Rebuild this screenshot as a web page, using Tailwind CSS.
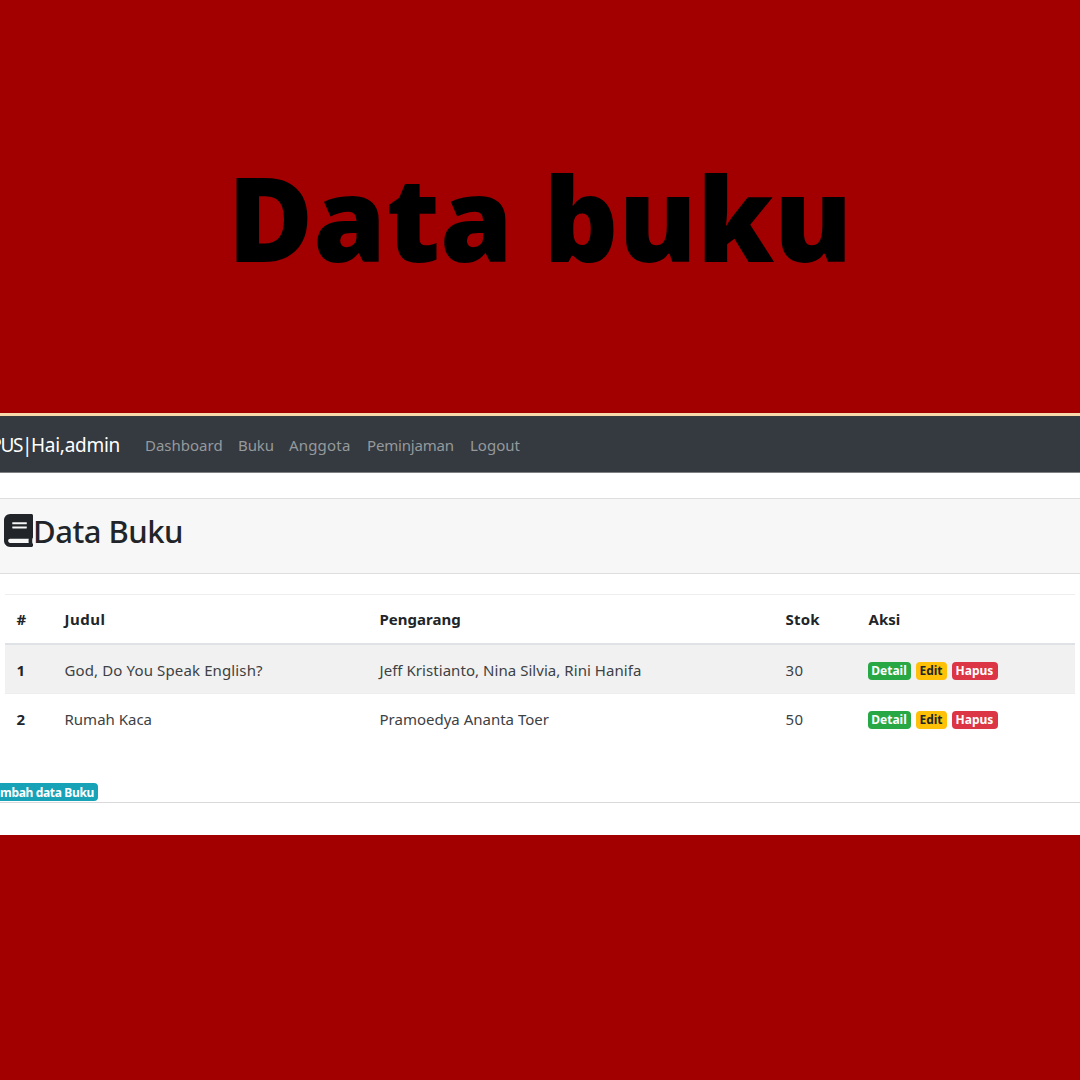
<!DOCTYPE html>
<html lang="id">
<head>
<meta charset="utf-8">
<title>Data buku</title>
<script src="https://cdn.jsdelivr.net/npm/@tailwindcss/browser@4"></script>
</head>
<body class="h-[1080px] w-[1080px] overflow-hidden bg-[#a20000] font-['Noto_Sans','Open_Sans',sans-serif] text-[#212529]">
  <header class="flex h-[413px] justify-center pt-[137px]">
    <h1 class="whitespace-nowrap font-['Open_Sans',sans-serif] text-[117px] leading-[160px] font-extrabold text-black">Data buku</h1>
  </header>
  <main class="h-[422px] overflow-hidden border-t-3 border-[#f8d9ac] bg-white">
    <nav class="flex h-[57px] items-center border-b border-[#7d8184] bg-[#343a40] pt-0.5 text-[15px] text-[#96999c]">
      <div class="flex w-[120px] justify-end pt-px text-[19px] whitespace-nowrap text-white"><span class="tracking-[-1.4px]">PUS|</span><span class="tracking-[-0.28px]">Hai,admin</span></div>
      <div class="flex pl-[25px]">
        <a class="w-[93px]" href="#">Dashboard</a>
        <a class="w-[51px] tracking-[-0.08px]" href="#">Buku</a>
        <a class="w-[78px] tracking-[0.18px]" href="#">Anggota</a>
        <a class="w-[103px] tracking-[-0.18px]" href="#">Peminjaman</a>
        <a href="#">Logout</a>
      </div>
    </nav>
    <section class="mt-[25px] h-[305px] border-b border-[#d9d9d9]">
      <div class="flex h-[76px] border-y border-[#dfdfdf] bg-[#f7f7f7] pt-[15px] pl-1">
        <svg class="h-[33px] w-[29px]" viewBox="0 0 448 512" preserveAspectRatio="none" fill="#212529"><path d="M448 360V24c0-13.300-10.700-24-24-24H96C43 0 0 43 0 96v320c0 53 43 96 96 96h328c13.300 0 24-10.700 24-24v-16c0-7.500-3.500-14.300-8.900-18.700-4.200-15.400-4.200-59.300 0-74.700 5.400-4.300 8.900-11.100 8.900-18.600zM128 134c0-3.300 2.700-6 6-6h212c3.300 0 6 2.700 6 6v20c0 3.300-2.700 6-6 6H134c-3.300 0-6-2.700-6-6v-20zm0 64c0-3.300 2.700-6 6-6h212c3.300 0 6 2.700 6 6v20c0 3.300-2.700 6-6 6H134c-3.300 0-6-2.700-6-6v-20zm253.400 250H96c-17.700 0-32-14.300-32-32 0-17.600 14.400-32 32-32h285.400c-1.900 17.100-1.900 46.900 0 64z"/></svg>
        <h2 class="text-[31px] leading-[34px] font-medium tracking-[-0.5px]">Data Buku</h2>
      </div>
      <div class="mx-[5px] mt-5 text-[15px]">
        <div class="grid h-[51px] grid-cols-[48px_315px_406px_83px_1fr] items-center border-t border-b-2 border-t-[#eceeef] border-b-[#dee2e6] pl-[11.500px] font-bold">
          <span>#</span><span class="tracking-[0.5px]">Judul</span><span>Pengarang</span><span class="tracking-[0.2px]">Stok</span><span>Aksi</span>
        </div>
        <div class="grid h-12 grid-cols-[48px_315px_406px_83px_1fr] items-center bg-[#f1f1f1] pt-0.5 pl-[11.500px] text-[#3d4144]">
          <b class="text-[#212529]">1</b><span class="tracking-[0.13px]">God, Do You Speak English?</span><span class="tracking-[0.05px]">Jeff Kristianto, Nina Silvia, Rini Hanifa</span><span class="tracking-[0.3px]">30</span>
          <span class="-ml-px flex gap-[5px] pt-0.5 text-xs leading-[18px] font-bold text-white"><a class="w-[43px] rounded bg-[#28a745] text-center">Detail</a><a class="w-[31px] rounded bg-[#ffc107] text-center text-[#212529]">Edit</a><a class="w-[46px] rounded bg-[#dc3545] text-center">Hapus</a></span>
        </div>
        <div class="grid h-[49px] grid-cols-[48px_315px_406px_83px_1fr] items-center border-t border-[#eceeef] pt-0.5 pl-[11.500px] text-[#3d4144]">
          <b class="text-[#212529]">2</b><span>Rumah Kaca</span><span>Pramoedya Ananta Toer</span><span class="tracking-[0.3px]">50</span>
          <span class="-ml-px flex gap-[5px] pt-px text-xs leading-[18px] font-bold text-white"><a class="w-[43px] rounded bg-[#28a745] text-center">Detail</a><a class="w-[31px] rounded bg-[#ffc107] text-center text-[#212529]">Edit</a><a class="w-[46px] rounded bg-[#dc3545] text-center">Hapus</a></span>
        </div>
      </div>
      <div class="mt-[41px] flex h-[18px] w-[98px] justify-end rounded-r bg-[#17a2b8] pr-1 text-xs leading-[19px] font-bold tracking-[-0.34px] whitespace-nowrap text-white">mbah data Buku</div>
    </section>
  </main>
</body>
</html>
